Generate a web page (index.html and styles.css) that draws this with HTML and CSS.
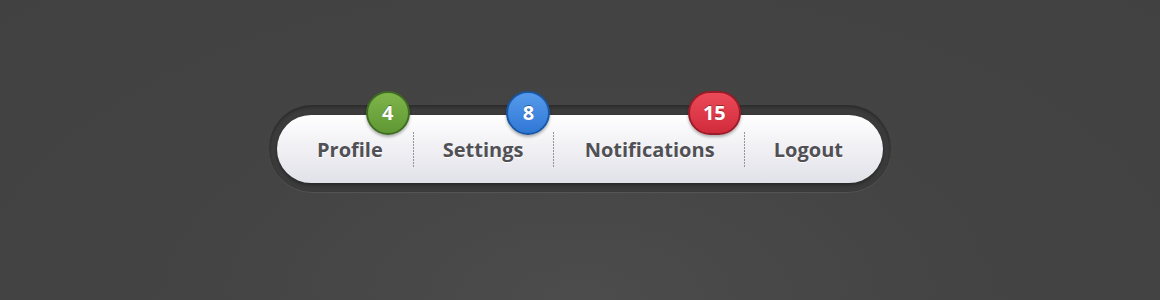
FILE: index.html
```html
<!DOCTYPE html>
<html lang="en">
  <head>
    <meta charset="utf-8">
    <title>Menu</title>
    <link rel="stylesheet" href="styles.css">
  </head>
  <body>
    <nav class="trilho">
      <ul class="menu">
        <li class="item"><a href="#">Profile</a><span class="badge verde">4</span></li>
        <li class="item"><a href="#">Settings</a><span class="badge azul">8</span></li>
        <li class="item"><a href="#">Notifications</a><span class="badge vermelho">15</span></li>
        <li class="item"><a href="#">Logout</a></li>
      </ul>
    </nav>
  </body>
</html>
```

FILE: styles.css
```css
* {
  margin: 0;
  padding: 0;
  box-sizing: border-box;
}

html,
body {
  height: 100%;
}

body {
  display: flex;
  align-items: center;
  justify-content: center;
  background: radial-gradient(ellipse at 50% 100%, #4c4c4c 0%, #444 45%, #414141 100%);
  font-family: "Open Sans", "DejaVu Sans", sans-serif;
}

.trilho {
  margin-bottom: 3px;
  padding: 10px 8px 9px;
  border-radius: 46px;
  background: #3d3d3d;
  box-shadow: inset 0 2px 4px rgba(0, 0, 0, .35), 0 1px 0 rgba(255, 255, 255, .08);
}

.menu {
  display: flex;
  list-style: none;
  width: 606px;
  height: 68px;
  padding: 0 10px;
  border-radius: 34px;
  background: linear-gradient(#fff, #f1f1f5 45%, #e1e1e9);
  box-shadow: 0 2px 4px rgba(0, 0, 0, .4);
}

.item {
  display: flex;
  align-items: center;
  position: relative;
  padding: 0 30px;
}

.item + .item {
  background: repeating-linear-gradient(to bottom, #94949c 0 2px, transparent 2px 3px) left center / 1px 35px no-repeat;
}

.item:nth-child(3) {
  flex: 1;
  justify-content: center;
  padding-right: 28px;
}

.item a {
  color: #505055;
  font-size: 20px;
  font-weight: 700;
  text-decoration: none;
  text-shadow: 0 1px 0 #fff;
}

.badge {
  position: absolute;
  top: -24px;
  right: 3px;
  min-width: 44px;
  height: 44px;
  padding: 0 8px;
  border: 2px solid;
  border-radius: 22px;
  color: #fff;
  font-size: 20px;
  font-weight: 700;
  line-height: 39px;
  text-align: center;
  text-shadow: 0 -1px 0 rgba(0, 0, 0, .35);
  box-shadow: 0 2px 3px rgba(0, 0, 0, .3);
}

.verde {
  border-color: #3f6b23;
  background: linear-gradient(#7fb44a, #5f9834);
}

.azul {
  border-color: #1b56a2;
  background: linear-gradient(#559aea, #3078d6);
}

.vermelho {
  padding: 0 13px;
  border-color: #9a1c28;
  background: linear-gradient(#ec4a58, #d12b3b);
}
```
